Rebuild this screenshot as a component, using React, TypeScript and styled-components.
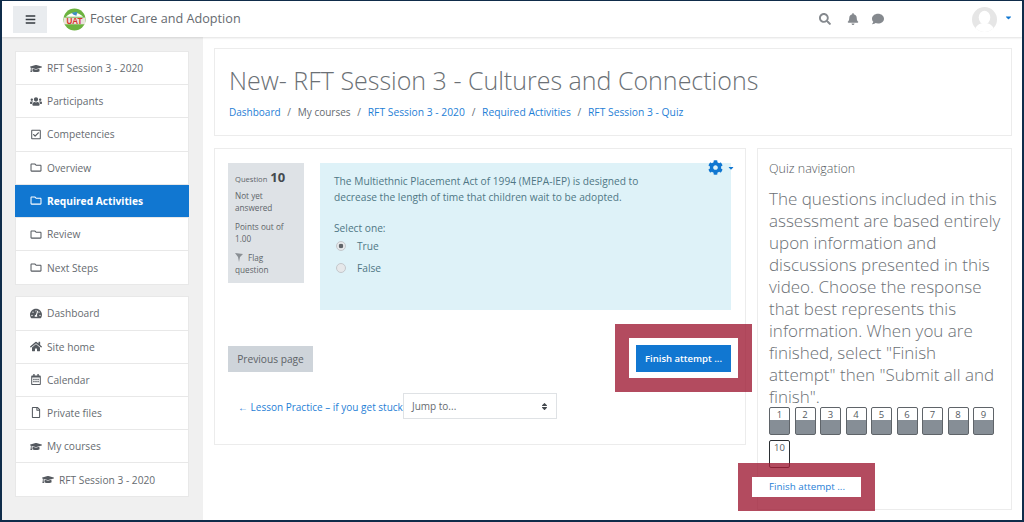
import React from "react"
import styled, { createGlobalStyle } from "styled-components"
import {
  FaBars,
  FaBell,
  FaCaretDown,
  FaCog,
  FaComment,
  FaGraduationCap,
  FaHome,
  FaRegCalendarAlt,
  FaRegCheckSquare,
  FaRegFile,
  FaRegFolder,
  FaSearch,
  FaSort,
  FaTachometerAlt,
  FaUsers,
} from "react-icons/fa"

const GlobalStyle = createGlobalStyle`
  html, body {
    margin: 0;
    padding: 0;
    background: #fff;
  }
  * {
    box-sizing: border-box;
  }
`

const Frame = styled.div`
  position: relative;
  width: 1024px;
  height: 522px;
  overflow: hidden;
  border: solid #0f2c4a;
  border-width: 1px 2px 2px 2px;
  background: #fff;
  color: #666b70;
  font-family: "Open Sans", "Liberation Sans", sans-serif;
  font-size: 10px;
  display: flex;
  flex-direction: column;
`

const Navbar = styled.header`
  flex: none;
  height: 36px;
  display: flex;
  align-items: center;
  padding-left: 11px;
  background: #fff;
  box-shadow: 0 1px 2px rgba(0, 0, 0, 0.12);
  position: relative;
  z-index: 1;
`

const MenuButton = styled.div`
  width: 34px;
  height: 27px;
  background: #e9ecef;
  display: flex;
  align-items: center;
  justify-content: center;
  color: #343a40;
  font-size: 11px;
`

const Logo = styled.svg`
  width: 23px;
  height: 23px;
  margin-left: 16px;
`

const Brand = styled.div`
  margin: -2px 0 0 4px;
  font-size: 12.65px;
  color: #666b70;
`

const NavTools = styled.div`
  margin-left: auto;
  display: flex;
  align-items: center;
  color: #85898e;
  font-size: 12px;
`

const ToolIcon = styled.span<{ $gap: number }>`
  display: flex;
  margin-right: ${(p) => p.$gap}px;
`

const Avatar = styled.svg`
  width: 25px;
  height: 25px;
`

const UserCaret = styled.span`
  display: flex;
  margin: -3px 9px 0 7px;
  color: #1177d1;
  font-size: 9px;
`

const Body = styled.div`
  flex: 1;
  min-height: 0;
  display: flex;
`

const Drawer = styled.aside`
  flex: none;
  width: 201px;
  padding: 14px 14px 0 13px;
  background: #f0f0f0;
  display: flex;
  flex-direction: column;
  gap: 11px;
`

const NavBlock = styled.nav`
  background: #fff;
  border: 1px solid #e8e8e8;
`

const NavRow = styled.div<{ $active?: boolean; $indent?: boolean }>`
  height: 33.2px;
  display: flex;
  align-items: center;
  gap: 5px;
  margin: 0 ${(p) => (p.$active ? -1 : 0)}px;
  padding-left: ${(p) => (p.$indent ? 26 : p.$active ? 15 : 14)}px;
  font-size: 10.2px;
  font-weight: ${(p) => (p.$active ? 700 : 400)};
  color: ${(p) => (p.$active ? "#fff" : "#666b70")};
  background: ${(p) => (p.$active ? "#1177d1" : "#fff")};
  border-bottom: 1px solid #e8e8e8;
  &:last-child {
    border-bottom: 0;
  }
  svg {
    flex: none;
    width: 12px;
    height: 11px;
    color: ${(p) => (p.$active ? "#fff" : "#555a60")};
  }
`

const Main = styled.main`
  flex: 1;
  min-width: 0;
  padding: 11px 10px 0 11px;
  display: flex;
  flex-direction: column;
  gap: 12px;
`

const Card = styled.section`
  background: #fff;
  border: 1px solid #ececec;
`

const HeaderCard = styled(Card)`
  height: 88px;
  padding: 14px 14px 0;
`

const PageTitle = styled.h1`
  margin: 0;
  font-size: 25px;
  font-weight: 300;
  line-height: 35px;
  color: #6b7075;
`

const Breadcrumb = styled.div`
  margin-top: 7px;
  display: flex;
  gap: 6.75px;
  font-size: 10px;
  color: #666b70;
`

const Crumb = styled.a`
  color: #1f80d6;
  font-size: 10.3px;
`

const CrumbLead = styled(Crumb)`
  font-size: 10px;
`

const Columns = styled.div`
  display: flex;
  gap: 11px;
  align-items: flex-start;
`

const QuestionCard = styled(Card)`
  position: relative;
  flex: none;
  width: 532px;
  height: 297px;
  padding: 14px 14px 0 13px;
`

const QuestionRow = styled.div`
  display: flex;
  gap: 16px;
  align-items: flex-start;
`

const InfoBox = styled.div`
  flex: none;
  width: 76px;
  height: 120px;
  padding: 8px 7px 0;
  background: #dee2e6;
  font-size: 8.2px;
  line-height: 12px;
  color: #60656a;
`

const InfoHead = styled.div`
  display: flex;
  align-items: baseline;
  gap: 3px;
  height: 19px;
  font-size: 7.6px;
  strong {
    font-size: 13px;
    color: #454a4f;
  }
`

const InfoLine = styled.div`
  margin-bottom: 7px;
`

const FlagIcon = styled.svg`
  width: 8px;
  height: 9px;
  margin-right: 5px;
  vertical-align: -1px;
`

const Prompt = styled.div`
  width: 411px;
  height: 147px;
  padding: 10px 14px;
  background: #def2f8;
  color: #4f7785;
  font-size: 10.2px;
  line-height: 16px;
`

const PromptText = styled.p`
  margin: 0 0 15px;
`

const RadioRow = styled.div`
  display: flex;
  align-items: center;
  height: 22px;
  margin-top: -1px;
  padding-left: 2px;
  gap: 11px;
  & + & {
    margin-top: 0;
  }
`

const RadioDot = styled.span<{ $checked?: boolean }>`
  width: 10px;
  height: 10px;
  border-radius: 50%;
  border: 1px solid #c4c8cc;
  background: ${(p) =>
    p.$checked ? "radial-gradient(circle, #60656a 0 2px, #e6e8ea 2.6px)" : "#e6e8ea"};
`

const GearMenu = styled.div`
  position: absolute;
  top: 11px;
  right: 10px;
  display: flex;
  align-items: center;
  gap: 4px;
  color: #1177d1;
  font-size: 15px;
`

const GearCaret = styled.span`
  display: flex;
  font-size: 8px;
`

const ActionRow = styled.div`
  margin-top: 35px;
  display: flex;
  justify-content: space-between;
  align-items: center;
`

const SecondaryButton = styled.div`
  width: 85px;
  height: 26px;
  display: flex;
  align-items: center;
  justify-content: center;
  background: #ced4da;
  color: #5d6267;
  font-size: 10.2px;
`

const PrimaryButton = styled.div`
  position: relative;
  z-index: 2;
  width: 95px;
  height: 27px;
  display: flex;
  align-items: center;
  justify-content: center;
  background: #1177d1;
  color: #fff;
  font-size: 9.5px;
  font-weight: 600;
`

const JumpRow = styled.div`
  margin-top: 21px;
  padding-left: 10px;
  display: flex;
  align-items: center;
`

const ActivityLink = styled.a`
  width: 165px;
  flex: none;
  overflow: hidden;
  padding-top: 2px;
  white-space: nowrap;
  color: #1f80d6;
  font-size: 10px;
`

const JumpSelect = styled.div`
  width: 154px;
  height: 26px;
  padding: 0 8px;
  display: flex;
  align-items: center;
  justify-content: space-between;
  border: 1px solid #dfe2e5;
  background: #fff;
  color: #666b70;
  font-size: 10px;
  svg {
    width: 7px;
    height: 9px;
    color: #454a4f;
  }
`

const QuizCard = styled(Card)`
  flex: none;
  width: 255px;
  height: 362px;
  padding: 12px 10px 0 11px;
`

const QuizTitle = styled.div`
  font-size: 12.5px;
  font-weight: 300;
  line-height: 16px;
  color: #555a60;
`

const QuizText = styled.p`
  margin: 11px 0 0;
  height: 219px;
  font-size: 17px;
  font-weight: 300;
  line-height: 22.05px;
  color: #6b7075;
`

const NavGrid = styled.div`
  display: flex;
  flex-wrap: wrap;
  gap: 5px 4.5px;
  width: 233px;
`

const QuestionButton = styled.div<{ $current?: boolean }>`
  width: 21px;
  height: 28px;
  border: 1.5px solid ${(p) => (p.$current ? "#2b2f33" : "#5f6469")};
  border-radius: 2px;
  text-align: center;
  font-size: 9.5px;
  line-height: 13px;
  color: #555a60;
  background: ${(p) =>
    p.$current ? "#fff" : "linear-gradient(#fff 0 48%, #868e96 48%)"};
`

const FinishLink = styled.a`
  display: block;
  position: relative;
  z-index: 2;
  margin-top: 12px;
  color: #1f80d6;
  font-size: 9.8px;
`

/* the red boxes somebody drew over the screenshot */
const Callout = styled.div<{ $left: number; $top: number; $w: number; $h: number }>`
  position: absolute;
  left: ${(p) => p.$left}px;
  top: ${(p) => p.$top}px;
  width: ${(p) => p.$w}px;
  height: ${(p) => p.$h}px;
  border: 14px solid rgba(160, 30, 55, 0.8);
  background-color: #fff;
  background-clip: padding-box;
  z-index: 1;
`

const courseNav = [
  { icon: <FaGraduationCap />, label: "RFT Session 3 - 2020" },
  { icon: <FaUsers />, label: "Participants" },
  { icon: <FaRegCheckSquare />, label: "Competencies" },
  { icon: <FaRegFolder />, label: "Overview" },
  { icon: <FaRegFolder />, label: "Required Activities", active: true },
  { icon: <FaRegFolder />, label: "Review" },
  { icon: <FaRegFolder />, label: "Next Steps" },
]

const siteNav = [
  { icon: <FaTachometerAlt />, label: "Dashboard" },
  { icon: <FaHome />, label: "Site home" },
  { icon: <FaRegCalendarAlt />, label: "Calendar" },
  { icon: <FaRegFile />, label: "Private files" },
  { icon: <FaGraduationCap />, label: "My courses" },
  { icon: <FaGraduationCap />, label: "RFT Session 3 - 2020", indent: true },
]

const App = () => (
  <>
    <GlobalStyle />
    <Frame>
      <Navbar>
        <MenuButton>
          <FaBars />
        </MenuButton>
        <Logo viewBox="0 0 24 24">
          <circle cx="12" cy="12" r="11.5" fill="#6cb33f" />
          <path d="M3 9 Q12 1 21 9 Z" fill="#fff" />
          <path d="M9 5 L15 4 L14 8 L11 7 Z" fill="#3f8fc0" />
          <rect x="1" y="10" width="22" height="7" fill="#e9e4dc" />
          <text x="12" y="16.6" textAnchor="middle" fontSize="8.5" fontWeight="700" fill="#d8342c" fontFamily="Liberation Sans, sans-serif">UAT</text>
        </Logo>
        <Brand>Foster Care and Adoption</Brand>
        <NavTools>
          <ToolIcon $gap={16}>
            <FaSearch />
          </ToolIcon>
          <ToolIcon $gap={13}>
            <FaBell />
          </ToolIcon>
          <ToolIcon $gap={88}>
            <FaComment />
          </ToolIcon>
          <Avatar viewBox="0 0 26 26">
            <defs>
              <clipPath id="avatar-clip">
                <circle cx="13" cy="13" r="13" />
              </clipPath>
            </defs>
            <g clipPath="url(#avatar-clip)">
              <rect width="26" height="26" fill="#e6e6e6" />
              <ellipse cx="13" cy="11" rx="6" ry="7" fill="#fff" />
              <path d="M2 26 Q4 18 10 17 L16 17 Q22 18 24 26 Z" fill="#fff" />
            </g>
          </Avatar>
          <UserCaret>
            <FaCaretDown />
          </UserCaret>
        </NavTools>
      </Navbar>
      <Body>
        <Drawer>
          <NavBlock>
            {courseNav.map((item) => (
              <NavRow key={item.label} $active={item.active}>
                {item.icon}
                {item.label}
              </NavRow>
            ))}
          </NavBlock>
          <NavBlock>
            {siteNav.map((item) => (
              <NavRow key={item.label + item.indent} $indent={item.indent}>
                {item.icon}
                {item.label}
              </NavRow>
            ))}
          </NavBlock>
        </Drawer>
        <Main>
          <HeaderCard>
            <PageTitle>New- RFT Session 3 - Cultures and Connections</PageTitle>
            <Breadcrumb>
              <CrumbLead>Dashboard</CrumbLead>
              <span>/</span>
              <span>My courses</span>
              <span>/</span>
              <Crumb>RFT Session 3 - 2020</Crumb>
              <span>/</span>
              <Crumb>Required Activities</Crumb>
              <span>/</span>
              <Crumb>RFT Session 3 - Quiz</Crumb>
            </Breadcrumb>
          </HeaderCard>
          <Columns>
            <QuestionCard>
              <GearMenu>
                <FaCog />
                <GearCaret>
                  <FaCaretDown />
                </GearCaret>
              </GearMenu>
              <QuestionRow>
                <InfoBox>
                  <InfoHead>
                    Question <strong>10</strong>
                  </InfoHead>
                  <InfoLine>
                    Not yet
                    <br />
                    answered
                  </InfoLine>
                  <InfoLine>
                    Points out of
                    <br />
                    1.00
                  </InfoLine>
                  <InfoLine>
                    <FlagIcon viewBox="0 0 8 9">
                      <path d="M0 0 L8 1 L5 4 L4 9 L3 4 Z" fill="#8a8f94" />
                    </FlagIcon>
                    Flag
                    <br />
                    question
                  </InfoLine>
                </InfoBox>
                <Prompt>
                  <PromptText>
                    The Multiethnic Placement Act of 1994 (MEPA-IEP) is designed to
                    <br />
                    decrease the length of time that children wait to be adopted.
                  </PromptText>
                  Select one:
                  <RadioRow>
                    <RadioDot $checked />
                    True
                  </RadioRow>
                  <RadioRow>
                    <RadioDot />
                    False
                  </RadioRow>
                </Prompt>
              </QuestionRow>
              <ActionRow>
                <SecondaryButton>Previous page</SecondaryButton>
                <PrimaryButton>Finish attempt ...</PrimaryButton>
              </ActionRow>
              <JumpRow>
                <ActivityLink>← Lesson Practice – if you get stuck</ActivityLink>
                <JumpSelect>
                  Jump to...
                  <FaSort />
                </JumpSelect>
              </JumpRow>
            </QuestionCard>
            <QuizCard>
              <QuizTitle>Quiz navigation</QuizTitle>
              <QuizText>
                The questions included in this assessment are based entirely upon
                information and discussions presented in this video. Choose the
                response that best represents this information. When you are finished,
                select "Finish attempt" then "Submit all and finish".
              </QuizText>
              <NavGrid>
                {[1, 2, 3, 4, 5, 6, 7, 8, 9, 10].map((n) => (
                  <QuestionButton key={n} $current={n === 10}>
                    {n}
                  </QuestionButton>
                ))}
              </NavGrid>
              <FinishLink>Finish attempt ...</FinishLink>
            </QuizCard>
          </Columns>
        </Main>
      </Body>
      <Callout $left={613} $top={323} $w={137} $h={68} />
      <Callout $left={736} $top={462} $w={137} $h={48} />
    </Frame>
  </>
)

export default App
